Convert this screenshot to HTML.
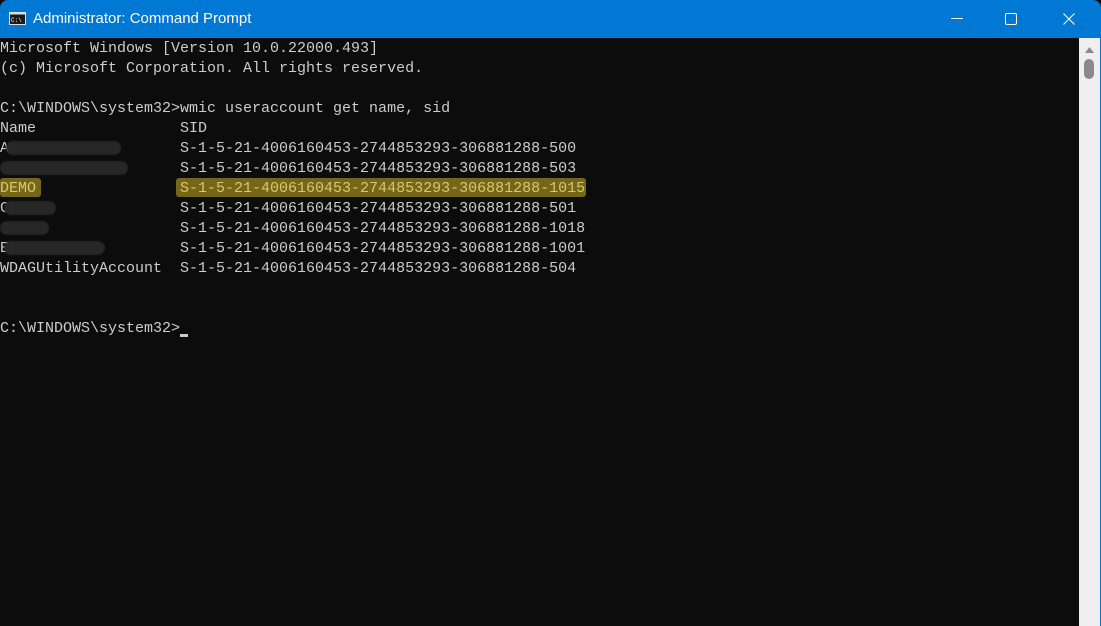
<!DOCTYPE html>
<html><head><meta charset="utf-8"><style>
*{margin:0;padding:0;box-sizing:border-box}
body{width:1101px;height:626px;overflow:hidden;background:#0c0c0c;position:relative;font-family:"Liberation Sans",sans-serif}
#tb{position:absolute;left:0;top:0;width:1101px;height:38px;background:#0078d4;color:#fff;border-radius:8px 8px 0 0}
#tb .t{position:absolute;left:33px;top:10px;font-size:15px;color:#fff}
#term{position:absolute;left:0;top:39px;width:1079px;height:587px;background:#0c0c0c;font-family:"Liberation Mono",monospace;font-size:15px;color:#cccccc;white-space:pre;line-height:20px}
.l{position:absolute;left:0;height:20px}
#sb{position:absolute;left:1079px;top:38px;width:21px;height:588px;background:#efefef}
#edge{position:absolute;left:1100px;top:38px;width:1px;height:588px;background:#0078d4}
.blur{position:absolute;height:14px;background:#272727;border-radius:7px;filter:blur(0.8px)}
.hl{position:absolute;background:#76661a}
</style></head><body>
<div id="tb">
<svg style="position:absolute;left:9px;top:12px" width="17" height="13" viewBox="0 0 17 13"><rect x="0.5" y="0.5" width="16" height="12" fill="#1a1a1a" stroke="#ddd"/><rect x="0.5" y="0.5" width="16" height="2" fill="#ddd"/><text x="2" y="10" font-size="6" fill="#fff" font-family="Liberation Mono">C:\</text></svg>
<div class="t">Administrator: Command Prompt</div>
<svg style="position:absolute;left:951px;top:18px" width="12" height="2"><rect width="12" height="1" fill="#fff"/></svg>
<svg style="position:absolute;left:1005px;top:13px" width="12" height="12"><rect x="0.5" y="0.5" width="11" height="11" rx="1.5" fill="none" stroke="#fff"/></svg>
<svg style="position:absolute;left:1063px;top:13px" width="12" height="12"><path d="M0.5 0.5L11.5 11.5M11.5 0.5L0.5 11.5" stroke="#fff" stroke-width="1.1"/></svg>
</div>
<div id="term">
<div class="hl" style="left:0;top:139px;width:41px;height:19px;border-radius:3px"></div>
<div class="hl" style="left:176px;top:139px;width:410px;height:19px;border-radius:3px"></div>
<div class="l" style="top:0">Microsoft Windows [Version 10.0.22000.493]</div>
<div class="l" style="top:20px">(c) Microsoft Corporation. All rights reserved.</div>
<div class="l" style="top:60px">C:\WINDOWS\system32&gt;wmic useraccount get name, sid</div>
<div class="l" style="top:80px">Name                SID</div>
<div class="l" style="top:100px">A                   S-1-5-21-4006160453-2744853293-306881288-500</div>
<div class="l" style="top:120px">                    S-1-5-21-4006160453-2744853293-306881288-503</div>
<div class="l" style="top:140px;color:#d9c86c">DEMO                S-1-5-21-4006160453-2744853293-306881288-1015</div>
<div class="l" style="top:160px">C                   S-1-5-21-4006160453-2744853293-306881288-501</div>
<div class="l" style="top:180px">                    S-1-5-21-4006160453-2744853293-306881288-1018</div>
<div class="l" style="top:200px">E                   S-1-5-21-4006160453-2744853293-306881288-1001</div>
<div class="l" style="top:220px">WDAGUtilityAccount  S-1-5-21-4006160453-2744853293-306881288-504</div>
<div class="l" style="top:280px">C:\WINDOWS\system32&gt;</div>
<div style="position:absolute;left:180px;top:295px;width:8px;height:3px;background:#ccc"></div>
<div class="blur" style="left:6px;top:102px;width:115px"></div>
<div class="blur" style="left:0;top:122px;width:128px"></div>
<div class="blur" style="left:4px;top:162px;width:52px"></div>
<div class="blur" style="left:0;top:182px;width:49px"></div>
<div class="blur" style="left:4px;top:202px;width:101px"></div>
</div>
<div id="sb">
<svg style="position:absolute;left:5px;top:8px" width="11" height="8"><path d="M5.5 1L10 7H1Z" fill="#8a8a8a"/></svg>
<div style="position:absolute;left:5px;top:21px;width:10px;height:20px;background:#8a8a8a;border-radius:5px"></div>
</div>
<div id="edge"></div>
</body></html>
